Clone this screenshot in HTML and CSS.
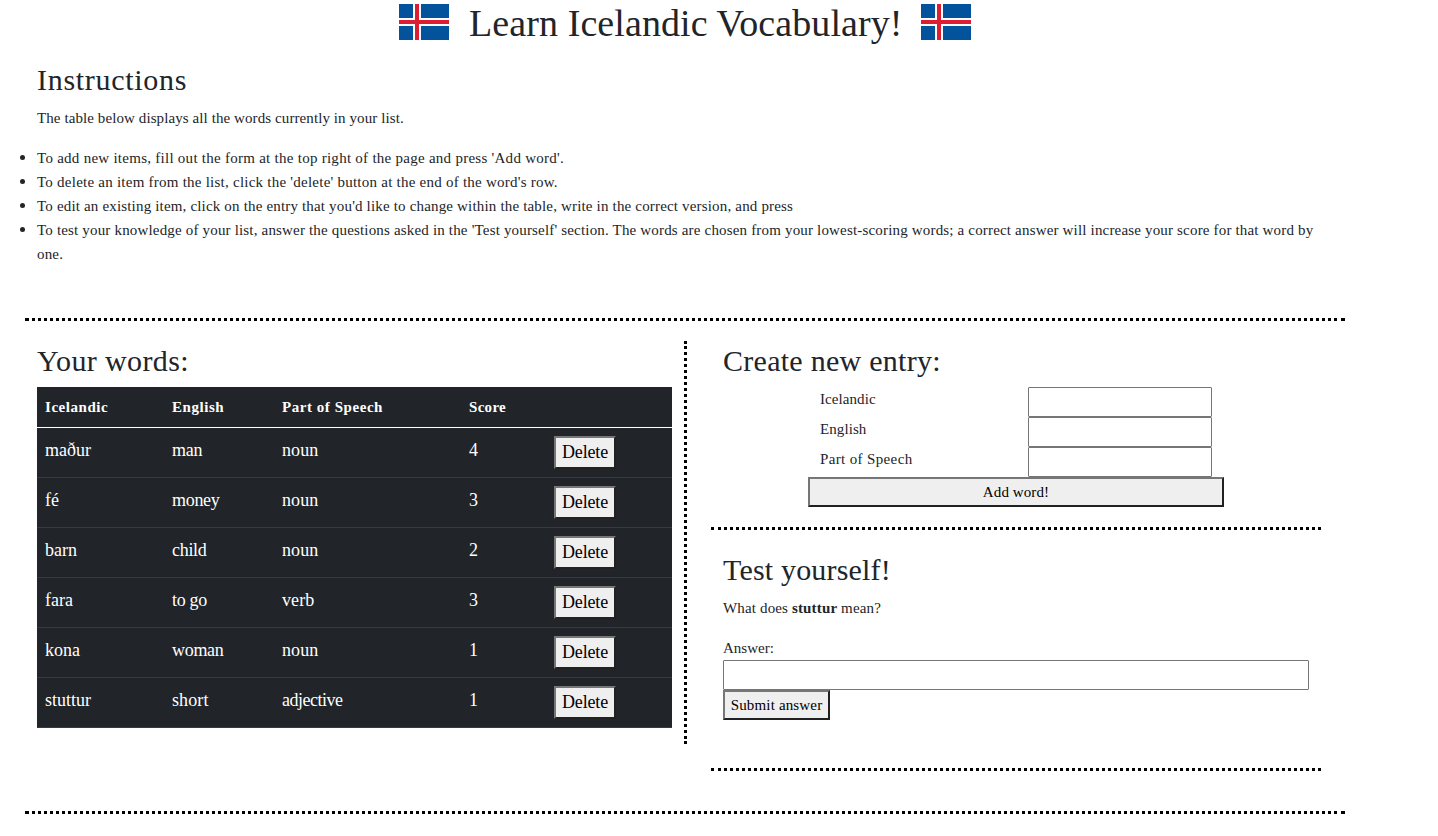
FILE: index.html
```html
<!DOCTYPE html>
<html lang="en">
<head>
<meta charset="utf-8">
<title>Learn Icelandic Vocabulary!</title>
<link rel="stylesheet" href="styles.css">
</head>
<body>
<header class="banner">
  <svg class="flag" viewBox="0 0 50 36"><path fill="#02529c" d="M0 0h50v36H0z"/><path fill="#fff" d="M14 0h8v36h-8zM0 14h50v8H0z"/><path fill="#dc1e35" d="M16 0h4v36h-4zM0 16h50v4H0z"/></svg>
  <h1 class="title">Learn Icelandic Vocabulary!</h1>
  <svg class="flag" viewBox="0 0 50 36"><path fill="#02529c" d="M0 0h50v36H0z"/><path fill="#fff" d="M14 0h8v36h-8zM0 14h50v8H0z"/><path fill="#dc1e35" d="M16 0h4v36h-4zM0 16h50v4H0z"/></svg>
</header>
<main class="container">
  <section class="instructions">
    <h2 class="h-instructions">Instructions</h2>
    <p class="intro">The table below displays all the words currently in your list.</p>
    <ul class="steps">
      <li class="step-add">To add new items, fill out the form at the top right of the page and press 'Add word'.</li>
      <li class="step-delete">To delete an item from the list, click the 'delete' button at the end of the word's row.</li>
      <li class="step-edit">To edit an existing item, click on the entry that you'd like to change within the table, write in the correct version, and press</li>
      <li class="step-test">To test your knowledge of your list, answer the questions asked in the 'Test yourself' section. The words are chosen from your lowest-scoring words; a correct answer will increase your score for that word by one.</li>
    </ul>
  </section>
  <div class="columns">
    <section class="words">
      <h2 class="h-words">Your words:</h2>
      <table class="word-table">
        <colgroup><col class="c1"><col class="c2"><col class="c3"><col class="c4"><col class="c5"></colgroup>
        <thead><tr><th>Icelandic</th><th>English</th><th>Part of Speech</th><th class="th-score">Score</th><th></th></tr></thead>
        <tbody>
          <tr><td>maður</td><td>man</td><td>noun</td><td>4</td><td><button class="delete">Delete</button></td></tr>
          <tr><td>fé</td><td>money</td><td>noun</td><td>3</td><td><button class="delete">Delete</button></td></tr>
          <tr><td>barn</td><td>child</td><td>noun</td><td>2</td><td><button class="delete">Delete</button></td></tr>
          <tr><td>fara</td><td>to go</td><td>verb</td><td>3</td><td><button class="delete">Delete</button></td></tr>
          <tr><td>kona</td><td>woman</td><td>noun</td><td>1</td><td><button class="delete">Delete</button></td></tr>
          <tr><td>stuttur</td><td class="wide">short</td><td class="long-pos">adjective</td><td>1</td><td><button class="delete">Delete</button></td></tr>
        </tbody>
      </table>
    </section>
    <div class="side">
      <section class="create">
        <h2 class="h-create">Create new entry:</h2>
        <form class="entry-form">
          <label for="ice">Icelandic</label><input id="ice" type="text">
          <label for="eng">English</label><input id="eng" type="text">
          <label for="pos" class="label-pos">Part of Speech</label><input id="pos" type="text">
          <button type="button" class="add">Add word!</button>
        </form>
      </section>
      <section class="test">
        <h2 class="h-test">Test yourself!</h2>
        <p class="question">What does <b>stuttur</b> mean?</p>
        <form class="answer-form">
          <label for="ans">Answer:</label>
          <input id="ans" type="text">
          <button type="button" class="submit">Submit answer</button>
        </form>
      </section>
    </div>
  </div>
</main>
</body>
</html>
```
FILE: styles.css
```css
* { box-sizing: border-box; }
body {
  margin: 0;
  width: 1370px;
  background: #fff;
  color: #212529;
  font: 15px/24px "Liberation Serif", serif;
}
h1, h2 { margin: 0; font-weight: 400; }
h2 { font-size: 30px; line-height: 37px; padding-top: 1px; margin-bottom: 8px; }
p { margin: 0 0 16px; }
input, button { font-family: inherit; font-size: 15px; margin: 0; }
input { height: 30px; border: 1px solid #767676; background: #fff; border-radius: 1px; }
button {
  height: 30px;
  padding: 0;
  border: 2px solid;
  border-color: #767676 #212121 #212121 #767676;
  border-radius: 0;
  background: #efefef;
  color: #000;
  line-height: 22px;
}

.banner { display: flex; justify-content: center; align-items: flex-start; height: 60px; gap: 20px; }
.flag { width: 50px; height: 36px; margin-top: 4px; }
.title { width: 432px; font-size: 38px; line-height: 46px; letter-spacing: 0.09px; white-space: nowrap; }
.container { width: 1320px; height: 754px; margin: 0 auto; border-bottom: 3px dotted #000; }
.instructions { height: 261px; padding: 0 12px; border-bottom: 3px dotted #000; }
.h-instructions { letter-spacing: 0.7px; }
.intro { letter-spacing: 0.09px; }
.steps { margin: 0; padding: 0; }
.steps li::marker { font-size: 17px; }
.step-add { letter-spacing: 0.265px; }
.step-delete { letter-spacing: 0.24px; }
.step-edit { letter-spacing: 0.173px; }
.step-test { letter-spacing: 0.175px; }
.columns { display: flex; align-items: flex-start; padding-top: 20px; }

.words { width: 662px; height: 403px; padding: 0 12px; border-right: 3px dotted #000; }
.h-words { letter-spacing: 0.38px; }
.word-table { width: 635px; table-layout: fixed; border-collapse: collapse; background: #212529; color: #fff; font-size: 18px; }
.c1 { width: 127px; }
.c2 { width: 110px; }
.c3 { width: 187px; }
.c4 { width: 85px; }
.c5 { width: 126px; }
.word-table th { height: 40px; padding: 0 8px; text-align: left; font-size: 15px; letter-spacing: 0.55px; border-bottom: 1px solid #fff; }
.word-table .th-score { letter-spacing: 0.3px; }
.word-table td { height: 50px; padding: 8px 8px 0; vertical-align: top; line-height: 28px; border-bottom: 1px solid #373b3e; }
.word-table td:nth-child(2) { letter-spacing: -0.3px; }
.word-table td:nth-child(3) { letter-spacing: 0.1px; }
.word-table td.wide:nth-child(2) { letter-spacing: 0.1px; }
.word-table td.long-pos:nth-child(3) { letter-spacing: -0.5px; }
.delete { display: block; width: 62px; height: 33px; font-size: 18px; letter-spacing: -0.15px; }

.side { width: 610px; margin-left: 24px; }
.create { height: 189px; padding: 0 12px; border-bottom: 3px dotted #000; }
.h-create { letter-spacing: 0.27px; }
.entry-form { display: grid; grid-template-columns: 220px 184px 12px; grid-auto-rows: 30px; width: 416px; margin-left: 85px; }
.entry-form label { grid-column: 1; padding-left: 12px; letter-spacing: 0.08px; }
.entry-form .label-pos { letter-spacing: 0.36px; }
.entry-form input { grid-column: 2; width: 184px; }
.add { grid-column: 1 / 4; letter-spacing: 0.1px; }
.test { height: 241px; padding: 20px 12px 0; border-bottom: 3px dotted #000; }
.h-test { letter-spacing: 0.18px; }
.question { letter-spacing: 0.15px; }
.answer-form { display: flex; flex-direction: column; align-items: flex-start; }
.answer-form input { width: 586px; }
.submit { width: 107px; letter-spacing: 0.16px; }
```
